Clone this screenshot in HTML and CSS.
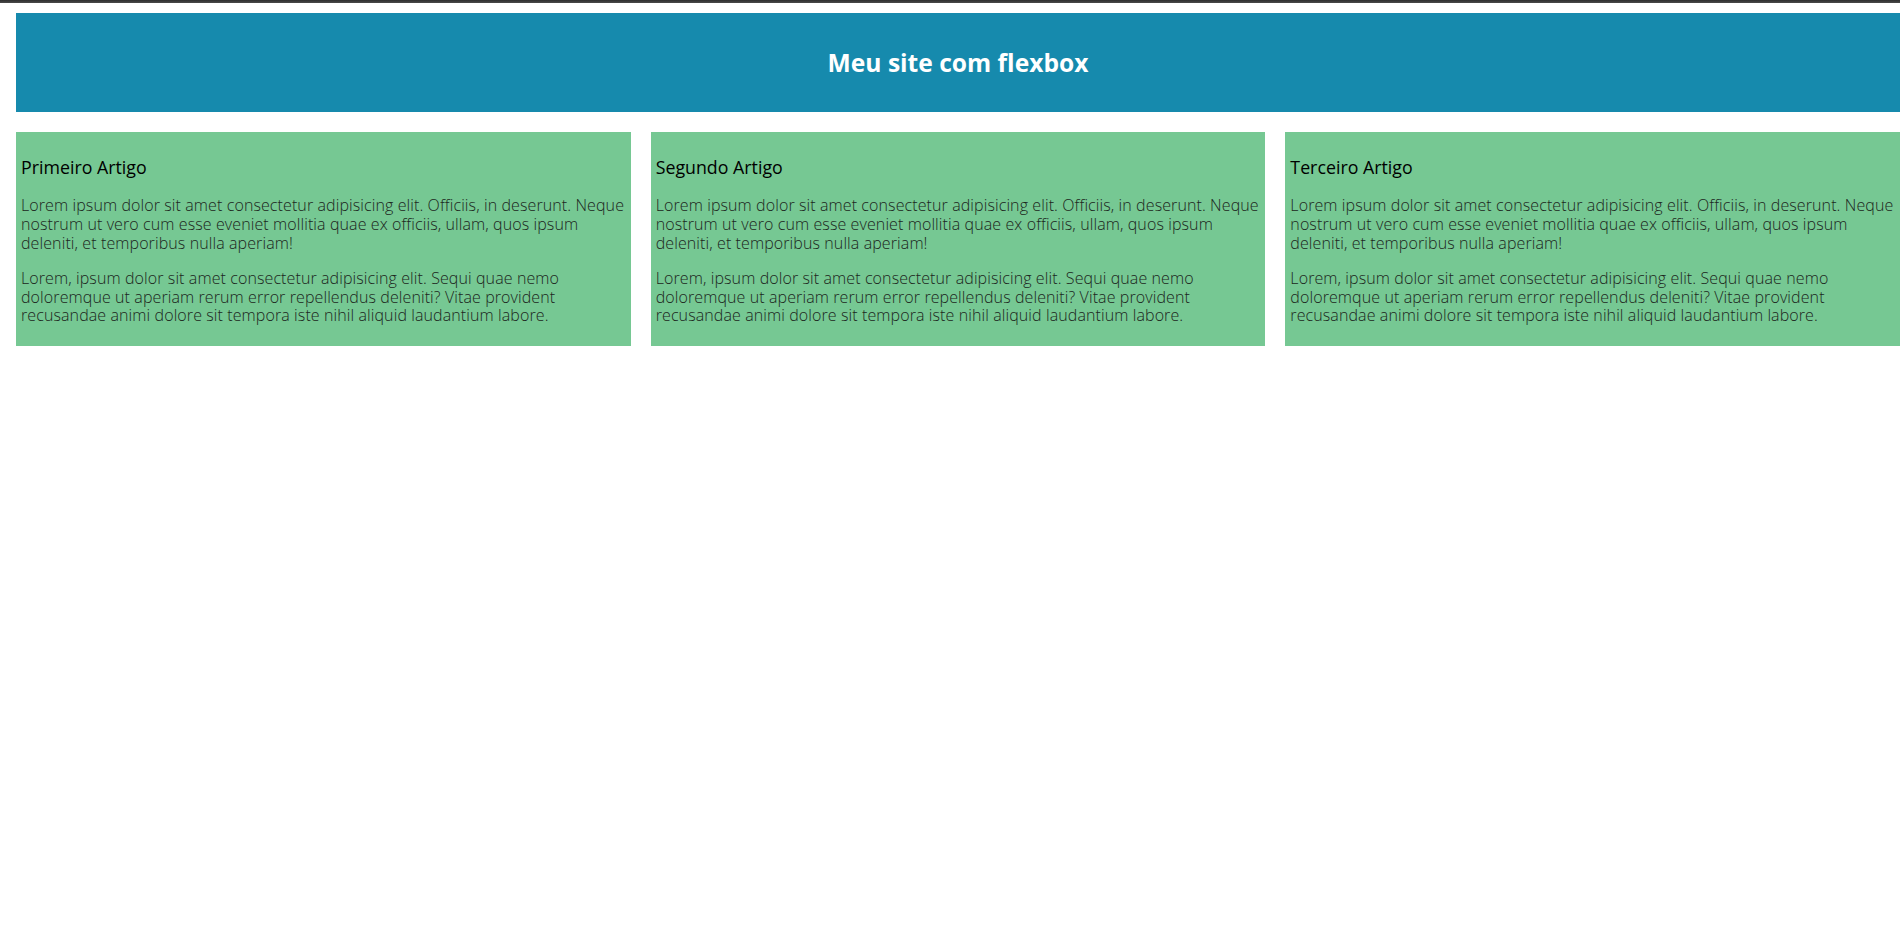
FILE: index.html
```html
<!DOCTYPE html>
<html lang="pt-BR">
<head>
<meta charset="utf-8">
<title>Meu site com flexbox</title>
<link rel="stylesheet" href="styles.css">
</head>
<body>
<div class="topbar"></div>
<div class="page">
  <header class="site-header">
    <h1 class="site-title">Meu site com flexbox</h1>
  </header>
  <main class="articles">
    <article class="article">
      <h3 class="article-title">Primeiro Artigo</h3>
      <p class="article-text">Lorem ipsum dolor sit amet consectetur adipisicing elit. Officiis, in deserunt. Neque nostrum ut vero cum esse eveniet mollitia quae ex officiis, ullam, quos ipsum deleniti, et temporibus nulla aperiam!</p>
      <p class="article-text">Lorem, ipsum dolor sit amet consectetur adipisicing elit. Sequi quae nemo doloremque ut aperiam rerum error repellendus deleniti? Vitae provident recusandae animi dolore sit tempora iste nihil aliquid laudantium labore.</p>
    </article>
    <article class="article">
      <h3 class="article-title">Segundo Artigo</h3>
      <p class="article-text">Lorem ipsum dolor sit amet consectetur adipisicing elit. Officiis, in deserunt. Neque nostrum ut vero cum esse eveniet mollitia quae ex officiis, ullam, quos ipsum deleniti, et temporibus nulla aperiam!</p>
      <p class="article-text">Lorem, ipsum dolor sit amet consectetur adipisicing elit. Sequi quae nemo doloremque ut aperiam rerum error repellendus deleniti? Vitae provident recusandae animi dolore sit tempora iste nihil aliquid laudantium labore.</p>
    </article>
    <article class="article">
      <h3 class="article-title">Terceiro Artigo</h3>
      <p class="article-text">Lorem ipsum dolor sit amet consectetur adipisicing elit. Officiis, in deserunt. Neque nostrum ut vero cum esse eveniet mollitia quae ex officiis, ullam, quos ipsum deleniti, et temporibus nulla aperiam!</p>
      <p class="article-text">Lorem, ipsum dolor sit amet consectetur adipisicing elit. Sequi quae nemo doloremque ut aperiam rerum error repellendus deleniti? Vitae provident recusandae animi dolore sit tempora iste nihil aliquid laudantium labore.</p>
    </article>
  </main>
</div>
</body>
</html>
```

FILE: styles.css
```css
* {
  box-sizing: border-box;
}

html, body {
  margin: 0;
  padding: 0;
  background: #ffffff;
}

body {
  font-family: "Open Sans", "Liberation Sans", sans-serif;
  color: #1f2a24;
}

.topbar {
  height: 3px;
  background: linear-gradient(#2e2e2e, #4a4a4a);
}

.page {
  padding: 10px 0 0 16px;
}

.site-header {
  height: 99px;
  background: #168aad;
  display: flex;
  align-items: center;
  justify-content: center;
}

.site-title {
  margin: 0;
  font-family: "Open Sans", "Liberation Sans", sans-serif;
  font-weight: 700;
  font-size: 24.6px;
  color: #ffffff;
}

.articles {
  display: flex;
  gap: 20px;
  margin-top: 20px;
}

.article {
  flex: 1 1 0;
  background: #76c893;
  padding: 5px;
}

.article-title {
  margin: 18.72px 0;
  font-size: 17.8px;
  line-height: 22px;
  font-weight: 400;
  color: #000000;
}

.article-text {
  margin: 16px 0;
  font-size: 16px;
  line-height: 18.8px;
  font-weight: 300;
  letter-spacing: 0.1px;
  color: #1c2620;
}
```
